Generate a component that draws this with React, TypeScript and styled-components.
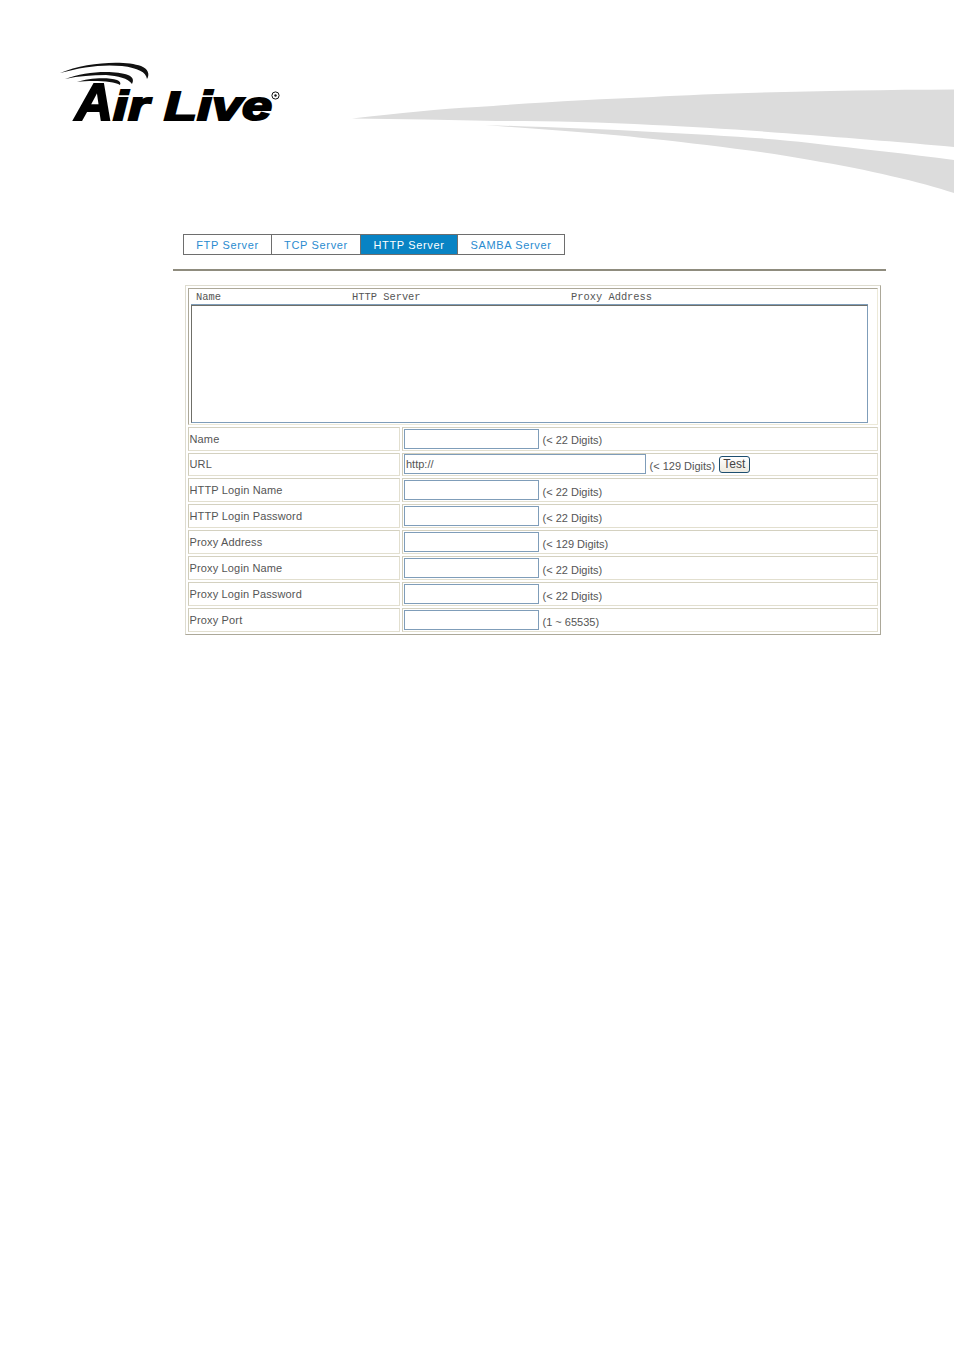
import styled, { createGlobalStyle } from "styled-components";

const GlobalStyle = createGlobalStyle`
  html, body {
    margin: 0;
    padding: 0;
    background: #fff;
  }
`;

const Page = styled.div`
  width: 954px;
  height: 1350px;
  overflow: hidden;
  font-family: "Liberation Sans", Arial, sans-serif;
  font-size: 11px;
  color: #555;
`;

const Banner = styled.svg`
  display: block;
  width: 954px;
  height: 234px;
`;

const Tabs = styled.div`
  display: flex;
  width: max-content;
  margin-left: 183px;
  border: 1px solid #6e6e6e;
`;

const Tab = styled.div<{ $active?: boolean; $width: number }>`
  box-sizing: border-box;
  width: ${(p) => p.$width}px;
  height: 19px;
  line-height: 21px;
  text-align: center;
  font-size: 11px;
  letter-spacing: 0.65px;
  border-left: 1px solid #6e6e6e;
  color: ${(p) => (p.$active ? "#fff" : "#2a8bd0")};
  background: ${(p) => (p.$active ? "#0883c4" : "#fff")};
  &:first-child {
    border-left: 0;
  }
`;

const Divider = styled.div`
  width: 713px;
  height: 2px;
  margin: 14px 0 14px 173px;
  background: #8f8c7e;
`;

const Panel = styled.div`
  box-sizing: border-box;
  width: 696px;
  height: 350px;
  margin-left: 185px;
  padding: 2px;
  border: 1px solid #aca899;
  border-top-color: #dedccf;
  border-left-color: #dedccf;
  display: flex;
  flex-direction: column;
  gap: 2px;
`;

const ListBox = styled.div`
  box-sizing: border-box;
  height: 137px;
  padding: 0 9px 1px 2px;
  border: 1px solid #aca899;
  border-bottom-color: #ece9d8;
  border-right-color: #ece9d8;
  display: flex;
  flex-direction: column;
`;

const ListHead = styled.div`
  display: grid;
  grid-template-columns: 156px 219px 1fr;
  height: 15px;
  padding-left: 5px;
  font-family: "Liberation Mono", "Courier New", monospace;
  font-size: 10.4px;
  line-height: 16px;
  color: #555;
  border-bottom: 1px solid #7f9db9;
`;

const ListArea = styled.div`
  flex: 1;
  border: 1px solid #6f6f68;
  border-right-color: #7f9db9;
  border-bottom-color: #7f9db9;
  background: #fff;
`;

const Row = styled.div`
  display: grid;
  grid-template-columns: 212px 1fr;
  gap: 2px;
  height: 24px;
`;

const Cell = styled.div`
  box-sizing: border-box;
  display: flex;
  align-items: center;
  border: 1px solid #e2dfcf;
  border-left-color: #cfccba;
  border-top-color: #d4d1c0;
`;

const LabelCell = styled(Cell)`
  padding-left: 0.5px;
  letter-spacing: 0.15px;
`;

const ValueCell = styled(Cell)`
  padding-left: 1px;
  gap: 3.5px;
`;

const Field = styled.div<{ $width: number }>`
  box-sizing: border-box;
  width: ${(p) => p.$width}px;
  height: 20px;
  padding-left: 1px;
  line-height: 18px;
  border: 1px solid #7f9db9;
  background: #fff;
  color: #555;
`;

const Hint = styled.span`
  margin-top: 3px;
  white-space: nowrap;
`;

const TestButton = styled.div`
  box-sizing: border-box;
  width: 31px;
  height: 17px;
  font-size: 12px;
  line-height: 14px;
  text-align: center;
  border: 1px solid #1d4f6f;
  border-radius: 3px;
  background: linear-gradient(#fff, #ece9df);
  color: #444;
`;

const tabs = [
  { label: "FTP Server", width: 87 },
  { label: "TCP Server", width: 89 },
  { label: "HTTP Server", width: 97, active: true },
  { label: "SAMBA Server", width: 107 },
];

const rows = [
  { label: "Name", width: 135, hint: "(< 22 Digits)" },
  { label: "URL", width: 242, hint: "(< 129 Digits)", value: "http://", test: true },
  { label: "HTTP Login Name", width: 135, hint: "(< 22 Digits)" },
  { label: "HTTP Login Password", width: 135, hint: "(< 22 Digits)" },
  { label: "Proxy Address", width: 135, hint: "(< 129 Digits)" },
  { label: "Proxy Login Name", width: 135, hint: "(< 22 Digits)" },
  { label: "Proxy Login Password", width: 135, hint: "(< 22 Digits)" },
  { label: "Proxy Port", width: 135, hint: "(1 ~ 65535)" },
];

const App = () => (
  <Page>
    <GlobalStyle />
    <Banner viewBox="0 0 954 234">
      {/* grey swooshes */}
      <path
        d="M352 118.5 C400 113 440 109 477 107 C530 103 600 99 653 97 C720 93 840 90 954 89.5 L954 147 C900 142 860 139 810 135 C760 131 700 127 653 125 C600 122 540 121 497 121 C450 120 400 119 352 118.5 Z"
        fill="#dcdcdc"
      />
      <path
        d="M485 125 C540 127 600 129 653 132 C710 135 770 138 810 143 C860 149 910 154 954 160 L954 193 C920 182 870 170 810 160 C760 151 700 144 653 139 C610 134 550 130 485 125 Z"
        fill="#dcdcdc"
      />
      {/* logo arcs */}
      <path
        d="M60 73 C85 62 125 60 141 66 C148 69 150 74 147 79 C146 72 138 68 122 66 C102 64 82 67 60 73 Z"
        fill="#111"
      />
      <path
        d="M65 79 C85 71 115 70 128 75 C133 77 134 80 132 84 C128 78 118 76 106 75 C92 75 79 76 65 79 Z"
        fill="#111"
      />
      <path
        d="M77 82 C88 78 108 77 117 80 C120 81 121 83 120 85 C114 81 92 80 77 82 Z"
        fill="#111"
      />
      {/* logo wordmark */}
      <text
        x="75"
        y="119.5"
        fontFamily="'Liberation Sans', Arial, sans-serif"
        fontWeight="700"
        fontStyle="italic"
        fontSize="52"
        fill="#000"
        stroke="#000"
        strokeWidth="2"
        textLength="38"
        lengthAdjust="spacingAndGlyphs"
      >
        A
      </text>
      <text
        x="113"
        y="119.5"
        fontFamily="'Liberation Sans', Arial, sans-serif"
        fontWeight="700"
        fontStyle="italic"
        fontSize="40"
        fill="#000"
        stroke="#000"
        strokeWidth="2"
        textLength="36"
        lengthAdjust="spacingAndGlyphs"
      >
        ir
      </text>
      <text
        x="164"
        y="119.5"
        fontFamily="'Liberation Sans', Arial, sans-serif"
        fontWeight="700"
        fontStyle="italic"
        fontSize="40"
        fill="#000"
        stroke="#000"
        strokeWidth="2"
        textLength="108"
        lengthAdjust="spacingAndGlyphs"
      >
        Live
      </text>
      <circle cx="275.5" cy="95.5" r="3.6" fill="none" stroke="#111" strokeWidth="1" />
      <circle cx="275.5" cy="95.5" r="1.2" fill="#111" />
    </Banner>

    <Tabs>
      {tabs.map((tab) => (
        <Tab key={tab.label} $active={tab.active} $width={tab.width}>
          {tab.label}
        </Tab>
      ))}
    </Tabs>
    <Divider />

    <Panel>
      <ListBox>
        <ListHead>
          <span>Name</span>
          <span>HTTP Server</span>
          <span>Proxy Address</span>
        </ListHead>
        <ListArea />
      </ListBox>
      {rows.map((row) => (
        <Row key={row.label}>
          <LabelCell>{row.label}</LabelCell>
          <ValueCell>
            <Field $width={row.width}>{row.value}</Field>
            <Hint>{row.hint}</Hint>
            {row.test && <TestButton>Test</TestButton>}
          </ValueCell>
        </Row>
      ))}
    </Panel>
  </Page>
);

export default App;
